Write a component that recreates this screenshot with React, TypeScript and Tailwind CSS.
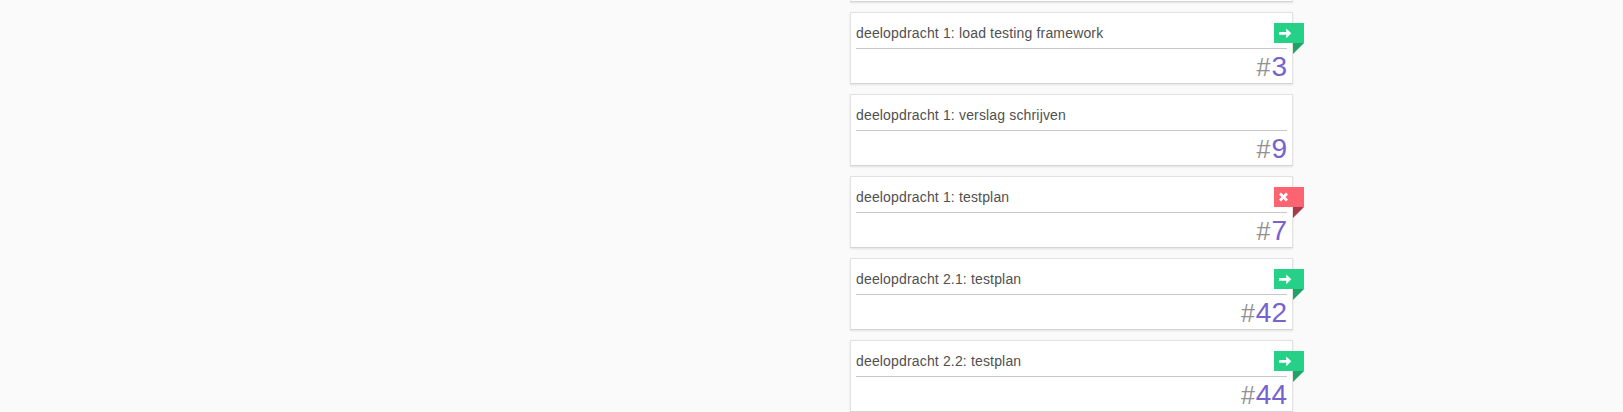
type Status = "next" | "blocked";

interface Story {
  id: number;
  title: string;
  status?: Status;
}

const stories: Story[] = [
  { id: 3, title: "deelopdracht 1: load testing framework", status: "next" },
  { id: 9, title: "deelopdracht 1: verslag schrijven" },
  { id: 7, title: "deelopdracht 1: testplan", status: "blocked" },
  { id: 42, title: "deelopdracht 2.1: testplan", status: "next" },
  { id: 44, title: "deelopdracht 2.2: testplan", status: "next" },
];

function Ribbon({ status }: { status: Status }) {
  const next = status === "next";
  return (
    <div className="absolute top-[10px] -right-[12px] w-[30px]">
      <div className={`flex h-5 items-center pl-[5px] ${next ? "bg-[#25d187]" : "bg-[#fb6470]"}`}>
        {next ? (
          <svg width="13" height="12" viewBox="0 0 13 12" fill="#fff">
            <path d="M0 5H7.2V1.4L12.3 6.3L7.2 11.2V7.8H0Z" />
          </svg>
        ) : (
          <svg width="9" height="10" viewBox="0 0 9 10" stroke="#fff" strokeWidth="2.7">
            <path d="M1 1.5L8 8.5M8 1.5L1 8.5" />
          </svg>
        )}
      </div>
      <svg className="ml-auto block" width="11" height="11" viewBox="0 0 11 11">
        <path d="M0 0H11L0 11Z" fill={next ? "#20a267" : "#a93a4b"} />
      </svg>
    </div>
  );
}

function StoryCard({ story }: { story: Story }) {
  return (
    <article className="relative h-[72px] shrink-0 border border-[#e2e2e2] border-b-[#d4d4d4] bg-white px-[5px] shadow-[0_1px_2px_rgba(0,0,0,0.1)]">
      <h2 className="h-9 border-b border-[#c8c8c8] pt-[10px] text-[14px] leading-5 tracking-[0.16px] text-[#505050]">
        {story.title}
      </h2>
      <div className="pt-px text-right text-[28px] leading-[34px] text-[#7763cd]">
        <span className="mr-px text-[25px] text-[#919191]">#</span>
        {story.id}
      </div>
      {story.status && <Ribbon status={story.status} />}
    </article>
  );
}

export default function App() {
  return (
    <main className="h-[412px] overflow-hidden bg-[#fafafa] pl-[850px] font-['Liberation_Sans',Arial,sans-serif]">
      <div className="flex w-[443px] flex-col gap-[10px]">
        <div className="h-[2px] shrink-0 border-x border-b border-[#e2e2e2] border-b-[#d4d4d4] bg-white shadow-[0_1px_2px_rgba(0,0,0,0.1)]" />
        {stories.map((story) => (
          <StoryCard key={story.id} story={story} />
        ))}
      </div>
    </main>
  );
}
